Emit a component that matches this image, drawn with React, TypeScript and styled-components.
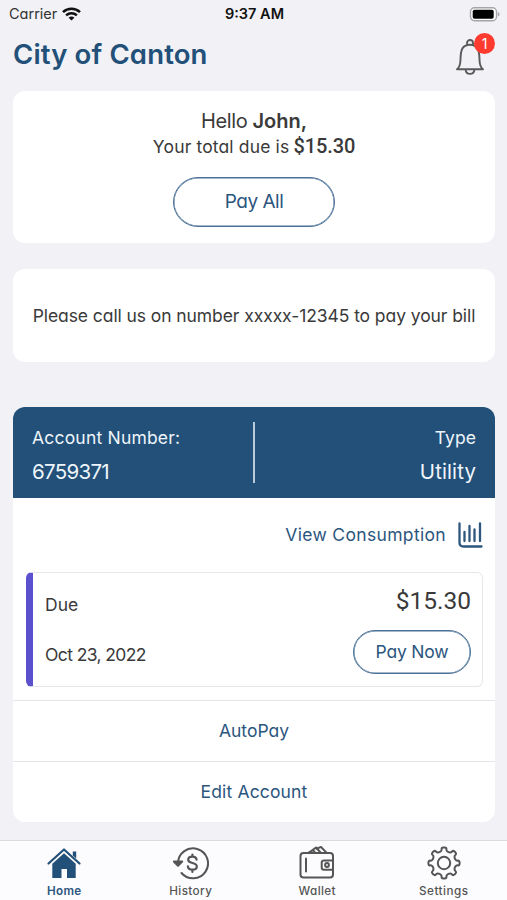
import React from 'react';
import styled, { createGlobalStyle } from 'styled-components';

const navy = '#225078';
const link = '#2c567e';
const ink = '#3a3a3a';

const GlobalStyle = createGlobalStyle`
  * { box-sizing: border-box; }
  body {
    margin: 0;
    background: #f1f1f6;
    font-family: Inter, 'Liberation Sans', sans-serif;
    font-feature-settings: 'cv11' 1;
    color: ${ink};
  }
  button { font: inherit; font-feature-settings: inherit; padding: 0; cursor: pointer; }
`;

const Screen = styled.div`
  width: 507px;
  height: 900px;
  display: flex;
  flex-direction: column;
  overflow: hidden;
  background: #f1f1f6;
`;

const Text = styled.span<{ $size?: number; $spacing?: number; $weight?: number; $color?: string; $line?: number }>`
  display: block;
  white-space: nowrap;
  font-size: ${(p) => p.$size ?? 17.5}px;
  line-height: ${(p) => p.$line ?? 26}px;
  letter-spacing: ${(p) => p.$spacing ?? 0}px;
  font-weight: ${(p) => p.$weight ?? 400};
  color: ${(p) => p.$color ?? ink};
`;

const Amount = styled(Text)`
  font-family: Roboto, sans-serif;
`;

const StatusBar = styled.header`
  height: 28px;
  padding: 0 7px 0 9px;
  display: grid;
  grid-template-columns: 1fr auto 1fr;
  align-items: center;
  color: #111;
`;

const Carrier = styled.div`
  display: flex;
  align-items: center;
  gap: 5px;
`;

const BatteryIcon = styled.svg`
  justify-self: end;
`;

const TitleBar = styled.div`
  height: 63px;
  padding: 9px 11px 0 13px;
  display: flex;
  justify-content: space-between;
`;

const BellButton = styled.div`
  position: relative;
  width: 41px;
  height: 42px;
`;

const BellIcon = styled.svg`
  display: block;
  margin-top: 1px;
`;

const Badge = styled.span`
  position: absolute;
  top: -4px;
  right: 1px;
  width: 21px;
  height: 21px;
  border-radius: 50%;
  background: #ff3b30;
  color: #fff;
  font-size: 14px;
  line-height: 21px;
  text-align: center;
`;

const Card = styled.section`
  margin: 0 12px 0 13px;
  background: #fff;
  border-radius: 12px;
  flex: none;
`;

const SummaryCard = styled(Card)`
  height: 152px;
  padding-top: 17px;
  display: flex;
  flex-direction: column;
  align-items: center;
`;

const Inline = styled.div<{ $gap: number }>`
  display: flex;
  align-items: baseline;
  gap: ${(p) => p.$gap}px;
`;

const PillButton = styled.button<{ $width: number; $height: number }>`
  width: ${(p) => p.$width}px;
  height: ${(p) => p.$height}px;
  display: flex;
  align-items: center;
  justify-content: center;
  border: 1.5px solid #4b7198;
  border-radius: 999px;
  background: #fff;
  box-shadow: inset 0 0 0 0.5px #4b7198;
`;

const PayAllSlot = styled.div`
  margin-top: 18px;
`;

const NoticeCard = styled(Card)`
  height: 93px;
  margin-top: 26px;
  display: flex;
  align-items: center;
  justify-content: center;
`;

const AccountCard = styled(Card)`
  height: 415px;
  margin-top: 45px;
  overflow: hidden;
`;

const AccountHeader = styled.div`
  height: 91px;
  padding: 15px 19px;
  display: flex;
  justify-content: space-between;
  background: ${navy};
`;

const HeaderColumn = styled.div<{ $end?: boolean }>`
  flex: 1;
  display: flex;
  flex-direction: column;
  gap: 8px;
  padding-top: 3px;
  align-items: ${(p) => (p.$end ? 'flex-end' : 'flex-start')};
`;

const Divider = styled.div`
  width: 2px;
  background: #b9cad9;
`;

const ConsumptionRow = styled.div`
  height: 74px;
  padding: 0 12px;
  display: flex;
  align-items: center;
  justify-content: flex-end;
  gap: 12px;
`;

const BillBox = styled.div`
  height: 115px;
  margin: 0 12px 13px 13px;
  padding: 15px 11px 0 12px;
  display: flex;
  justify-content: space-between;
  border: 1.5px solid #e7e7eb;
  border-left: 7px solid #5b50ce;
  border-radius: 6px;
`;

const BillLeft = styled.div`
  display: flex;
  flex-direction: column;
  gap: 24px;
  padding-top: 4px;
`;

const BillRight = styled.div`
  display: flex;
  flex-direction: column;
  align-items: flex-end;
  gap: 16px;
`;

const LinkRow = styled.div`
  height: 61px;
  display: flex;
  align-items: center;
  justify-content: center;
  border-top: 1px solid #e4e5e8;
`;

const TabBar = styled.nav`
  height: 60px;
  margin-top: auto;
  padding: 4px 0 0 1px;
  display: grid;
  grid-template-columns: repeat(4, 1fr);
  border-top: 1px solid #d9d9de;
  background: #fcfcfe;
`;

const Tab = styled.div`
  display: flex;
  flex-direction: column;
  align-items: center;
  gap: 3px;
`;

const TabIcon = styled.svg`
  display: block;
  width: 36px;
  height: 36px;
  fill: none;
  stroke: #555;
  stroke-width: 2;
  stroke-linecap: round;
  stroke-linejoin: round;
`;

function gearPath() {
  const pts: string[] = [];
  for (let i = 0; i < 8; i++) {
    const a = (i * Math.PI) / 4 - Math.PI / 2;
    const at = (r: number, d: number) =>
      `${(18 + r * Math.cos(a + d)).toFixed(2)} ${(18 + r * Math.sin(a + d)).toFixed(2)}`;
    pts.push(`${i === 0 ? 'M' : 'L'}${at(12.2, -0.25)}`);
    pts.push(`Q${at(13, -0.17)} ${at(14.2, -0.17)}`);
    pts.push(`Q${at(15.6, -0.16)} ${at(15.6, -0.05)}`);
    pts.push(`L${at(15.6, 0.05)}`);
    pts.push(`Q${at(15.6, 0.16)} ${at(14.2, 0.17)}`);
    pts.push(`Q${at(13, 0.17)} ${at(12.2, 0.25)}`);
    pts.push(`Q${at(11.3, 0.393)} ${at(12.2, 0.535)}`);
  }
  return pts.join(' ') + 'Z';
}

export default function App() {
  return (
    <>
      <GlobalStyle />
      <Screen>
        <StatusBar>
          <Carrier>
            <Text $size={14.5} $line={20} $color="#333">Carrier</Text>
            <svg width="19" height="14" viewBox="0 0 19 14" fill="none" stroke="#111" strokeWidth="2.6">
              <path d="M1 5.1C5.8.6 13.2.6 18 5.1" />
              <path d="M4.1 8.4c3.1-2.8 7.7-2.8 10.8 0" />
              <path d="M9.5 13.6 6.6 10.7c1.6-1.5 4.2-1.5 5.8 0z" fill="#111" stroke="none" />
            </svg>
          </Carrier>
          <Text $size={14.5} $weight={600} $line={20} $color="#111">9:37 AM</Text>
          <BatteryIcon width="31" height="15" viewBox="0 0 31 15">
            <rect x="1.5" y="0.7" width="26" height="13" rx="4" fill="#fff" stroke="#a5a5a8" strokeWidth="1.4" />
            <rect x="3.7" y="2.7" width="21" height="9" rx="1.8" fill="#000" />
            <path d="M28.9 5c2.2 1 2.2 3.6 0 4.6z" fill="#a5a5a8" />
          </BatteryIcon>
        </StatusBar>

        <TitleBar>
          <Text $size={27.5} $spacing={0.15} $weight={600} $line={34} $color={navy}>City of Canton</Text>
          <BellButton>
            <BellIcon width="30" height="38" viewBox="0 0 30 38" fill="none" stroke="#5a5a5a" strokeWidth="1.9" strokeLinejoin="round">
              <path d="M12 6.6V5a3 3 0 0 1 6 0v1.6" />
              <path d="M2 31.3c2.8-2 3.4-5 3.500-9.800C5.700 12.500 6.800 6.700 15 6.700s9.300 5.800 9.500 14.800c.1 4.800.7 7.800 3.500 9.800z" />
              <path d="M10.6 31.5c.3 5.800 8.500 5.800 8.800 0" />
            </BellIcon>
            <Badge>1</Badge>
          </BellButton>
        </TitleBar>

        <SummaryCard>
          <Inline $gap={5}>
            <Text $size={20} $spacing={-0.35}>Hello</Text>
            <Text $size={20} $weight={600}>John,</Text>
          </Inline>
          <Inline $gap={4}>
            <Text $spacing={0.15} $line={25}>Your total due is</Text>
            <Amount $size={20} $weight={500} $spacing={-0.1} $line={25}>$15.30</Amount>
          </Inline>
          <PayAllSlot>
            <PillButton $width={162} $height={50}>
              <Text $size={19} $spacing={-0.5} $color={link}>Pay All</Text>
            </PillButton>
          </PayAllSlot>
        </SummaryCard>

        <NoticeCard>
          <Text $spacing={-0.08}>Please call us on number xxxxx-12345 to pay your bill</Text>
        </NoticeCard>

        <AccountCard>
          <AccountHeader>
            <HeaderColumn>
              <Text $spacing={0.2} $color="#eef5fb">Account Number:</Text>
              <Text $size={20.5} $spacing={-0.7} $color="#eef5fb">6759371</Text>
            </HeaderColumn>
            <Divider />
            <HeaderColumn $end>
              <Text $spacing={0.1} $color="#eef5fb">Type</Text>
              <Text $size={20.5} $spacing={0.1} $color="#eef5fb">Utility</Text>
            </HeaderColumn>
          </AccountHeader>

          <ConsumptionRow>
            <Text $spacing={0.33} $color={link}>View Consumption</Text>
            <svg width="25" height="26" viewBox="0 0 25 26" fill="none" stroke={link} strokeWidth="2.3" strokeLinecap="round">
              <path d="M1.5 1.5v19q0 4 4 4H23.5" />
              <path d="M6.5 10v9M11.5 4V19M16.5 7.5v11.5M22 1.5V19" />
            </svg>
          </ConsumptionRow>

          <BillBox>
            <BillLeft>
              <Text>Due</Text>
              <Text $spacing={-0.6}>Oct 23, 2022</Text>
            </BillLeft>
            <BillRight>
              <Amount $size={24.5}>$15.30</Amount>
              <PillButton $width={118} $height={44}>
                <Text $spacing={-0.2} $color={link}>Pay Now</Text>
              </PillButton>
            </BillRight>
          </BillBox>

          <LinkRow><Text $color={link}>AutoPay</Text></LinkRow>
          <LinkRow><Text $spacing={0.15} $color={link}>Edit Account</Text></LinkRow>
        </AccountCard>

        <TabBar>
          <Tab>
            <TabIcon viewBox="0 0 36 36">
              <path d="M2.5 18.5 18 4.5l15.500 14" stroke={navy} strokeWidth="2.2" />
              <path d="M6.3 18.8 18 8.3l11.700 10.500V33H21v-9h-5.500v9H6.300z" fill={navy} stroke="none" />
              <path d="M26.8 6.5h3.400v7l-3.400-3z" fill={navy} stroke="none" />
            </TabIcon>
            <Text $size={11.7} $spacing={0.25} $weight={600} $line={14} $color={link}>Home</Text>
          </Tab>
          <Tab>
            <TabIcon viewBox="0 0 36 36">
              <path d="M5 18.5A15 15 0 1 1 8.500 28" />
              <path d="M.8 16.5h8.400L5 20.800z" fill="#555" />
              <path d="M23.6 14.6c-.3-2-2-3-4.200-3-2.500 0-4.200 1.200-4.200 3.200 0 4.500 8.600 2 8.600 6.600 0 2-1.800 3.300-4.400 3.300-2.400 0-4.300-1.200-4.500-3.400M19.400 9.500v2.100M19.400 24.700v2.200" strokeWidth="2.2" />
            </TabIcon>
            <Text $size={11.7} $spacing={0.4} $weight={500} $line={14} $color="#555">History</Text>
          </Tab>
          <Tab>
            <TabIcon viewBox="0 0 36 36">
              <rect x="1.5" y="8" width="32.5" height="24.5" rx="3" />
              <path d="m9.5 7.6 4-2.200 2 1M12.500 5.700l4.500-3.200 4.500 5M17.500 3.600 22 2l5.500 5.600" />
              <path d="M7 13.5v13" />
              <path d="M34 15.5H25q-2.300 0-2.300 2.300v4.600q0 2.300 2.300 2.300h9" />
              <circle cx="28" cy="20" r="1.9" />
            </TabIcon>
            <Text $size={11.7} $spacing={0.4} $weight={500} $line={14} $color="#555">Wallet</Text>
          </Tab>
          <Tab>
            <TabIcon viewBox="0 0 36 36">
              <path d={gearPath()} />
              <circle cx="18" cy="18" r="6.2" />
            </TabIcon>
            <Text $size={11.7} $spacing={0.5} $weight={500} $line={14} $color="#555">Settings</Text>
          </Tab>
        </TabBar>
      </Screen>
    </>
  );
}
